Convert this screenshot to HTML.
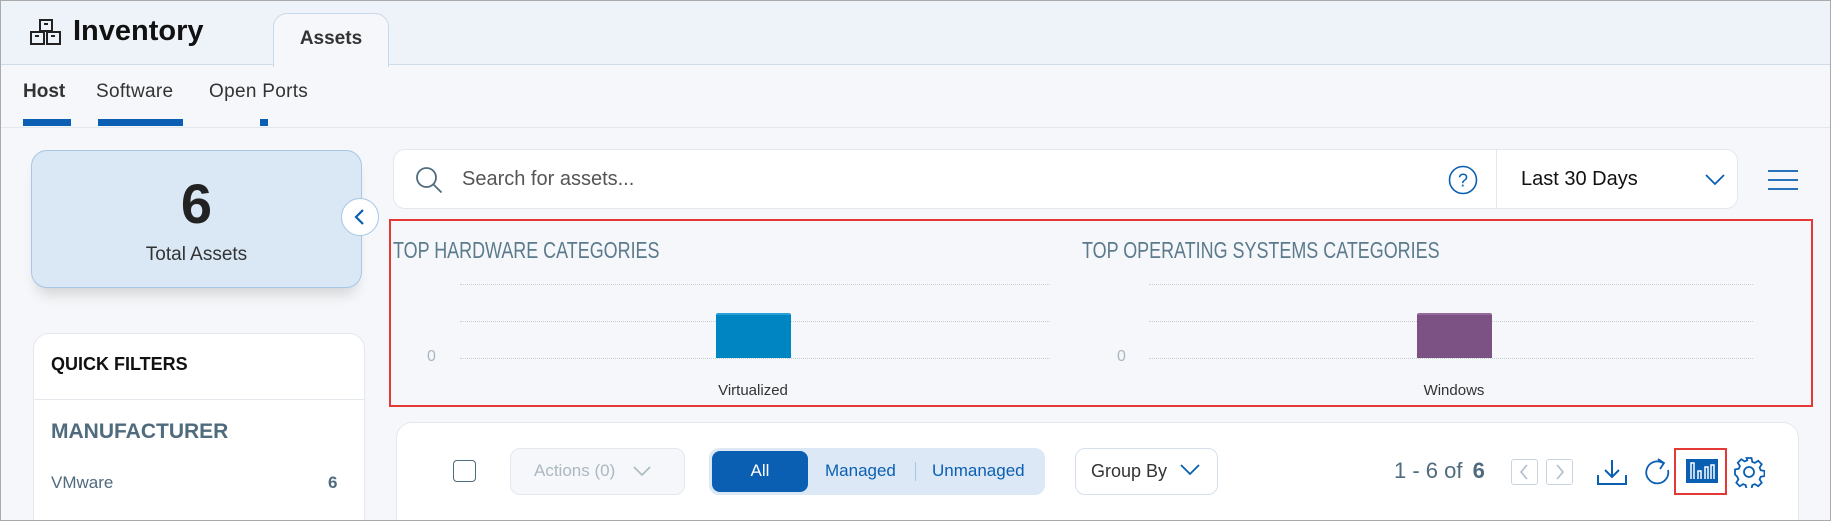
<!DOCTYPE html>
<html><head><meta charset="utf-8"><style>
*{box-sizing:border-box;margin:0;padding:0}
html,body{width:1831px;height:521px;overflow:hidden}
body{font-family:"Liberation Sans",sans-serif;background:#f5f7fa}
#w{position:relative;width:1831px;height:521px;overflow:hidden;border:1px solid #aaa;background:#f5f7fa}
.a{position:absolute}
.hdr{left:0;top:0;width:1829px;height:64px;background:#eef3fa;border-bottom:1px solid #cfdceb}
.t{white-space:nowrap}
.card{background:#fff;border:1px solid #e3e8ef;border-radius:16px}
.cb{border-bottom:none;border-radius:16px 16px 0 0}
.cond{display:inline-block;transform:scaleX(.78);transform-origin:left center;font-size:23px;color:#5b7a8c;letter-spacing:0}
.dot{border-top:1px dotted #c8d0d8;height:0}
</style></head><body><div id="w">
<div class="a hdr"></div>
<svg class="a" style="left:29px;top:18px" width="33" height="27" viewBox="0 0 33 27" fill="none" stroke="#222" stroke-width="2"><rect x="10" y="1" width="12" height="11"/><rect x="1" y="13" width="13" height="12"/><rect x="17" y="13" width="13" height="12"/><path d="M14 5h4M5 17h4M21 17h4"/></svg>
<div class="a t" style="left:72px;top:14px;font-size:29px;font-weight:bold;color:#111">Inventory</div>
<div class="a" style="left:272px;top:12px;width:116px;height:54px;background:#f5f7fa;border:1px solid #c9d9ec;border-bottom:none;border-radius:14px 14px 0 0"></div>
<div class="a t" style="left:272px;top:27px;width:116px;text-align:center;font-size:19px;font-weight:bold;color:#333">Assets</div>
<div class="a t" style="left:22px;top:80px;font-size:19px;font-weight:bold;color:#333">Host</div>
<div class="a t" style="left:95px;top:80px;font-size:19px;color:#333;letter-spacing:.3px">Software</div>
<div class="a t" style="left:208px;top:80px;font-size:19px;color:#333;letter-spacing:.3px">Open Ports</div>
<div class="a" style="left:22px;top:118px;width:48px;height:7px;background:#0b5fb3"></div>
<div class="a" style="left:97px;top:118px;width:85px;height:7px;background:#0b5fb3"></div>
<div class="a" style="left:259px;top:118px;width:8px;height:7px;background:#0b5fb3"></div>
<div class="a" style="left:0;top:126px;width:1829px;height:1px;background:#e3e8ee"></div>

<div class="a" style="left:30px;top:149px;width:331px;height:138px;background:#dae7f5;border:1px solid #a8c6e6;border-radius:16px;box-shadow:0 12px 14px -6px rgba(0,0,0,.15)"></div>
<div class="a t" style="left:30px;top:170px;width:331px;text-align:center;font-size:56px;font-weight:bold;color:#222">6</div>
<div class="a t" style="left:30px;top:243px;width:331px;text-align:center;font-size:19px;color:#333">Total Assets</div>
<div class="a" style="left:340px;top:197px;width:38px;height:38px;border-radius:50%;background:#fff;border:1px solid #a8c6e6"></div>
<svg class="a" style="left:352px;top:207px" width="14" height="18" viewBox="0 0 14 18"><path d="M10 2L3 9l7 7" fill="none" stroke="#0b5fb3" stroke-width="2.2"/></svg>

<div class="a card cb" style="left:32px;top:332px;width:332px;height:187px"></div>
<div class="a t" style="left:50px;top:353px;font-size:18px;font-weight:bold;color:#111">QUICK FILTERS</div>
<div class="a" style="left:33px;top:398px;width:330px;height:1px;background:#e5e9ee"></div>
<div class="a t" style="left:50px;top:419px;font-size:21px;font-weight:bold;color:#4f6b7e">MANUFACTURER</div>
<div class="a t" style="left:50px;top:472px;font-size:17px;color:#4f6b7e">VMware</div>
<div class="a t" style="left:327px;top:472px;font-size:17px;font-weight:bold;color:#4f6b7e">6</div>

<div class="a card" style="left:392px;top:148px;width:1345px;height:60px;border-radius:12px"></div>
<svg class="a" style="left:414px;top:165px" width="28" height="28" viewBox="0 0 28 28" fill="none" stroke="#4f6b7e" stroke-width="1.8"><circle cx="11.5" cy="11.5" r="9.5"/><path d="M18.5 18.5l8 8"/></svg>
<div class="a t" style="left:461px;top:167px;font-size:20px;color:#555">Search for assets...</div>
<svg class="a" style="left:1447px;top:164px" width="30" height="30" viewBox="0 0 30 30"><circle cx="15" cy="15" r="13.5" fill="none" stroke="#0b5fb3" stroke-width="1.6"/><text x="15" y="21.5" text-anchor="middle" font-family="Liberation Sans" font-size="18" fill="#0b5fb3">?</text></svg>
<div class="a" style="left:1495px;top:149px;width:1px;height:58px;background:#e3e8ef"></div>
<div class="a t" style="left:1520px;top:167px;font-size:20px;color:#111">Last 30 Days</div>
<svg class="a" style="left:1703px;top:171px" width="22" height="14" viewBox="0 0 22 14"><path d="M2 3l9 9 9-9" fill="none" stroke="#0b5fb3" stroke-width="1.8"/></svg>
<svg class="a" style="left:1766px;top:168px" width="32" height="22" viewBox="0 0 32 22" stroke="#0b5fb3" stroke-width="1.8"><path d="M1 2h30M1 11h30M1 20h30"/></svg>

<div class="a" style="left:388px;top:218px;width:1424px;height:188px;border:2px solid #e53935"></div>
<div class="a t" style="left:392px;top:236px"><span class="cond">TOP HARDWARE CATEGORIES</span></div>
<div class="a t" style="left:1081px;top:236px"><span class="cond">TOP OPERATING SYSTEMS CATEGORIES</span></div>
<div class="a dot" style="left:459px;top:283px;width:590px"></div>
<div class="a dot" style="left:459px;top:320px;width:590px"></div>
<div class="a dot" style="left:459px;top:357px;width:590px"></div>
<div class="a dot" style="left:1148px;top:283px;width:604px"></div>
<div class="a dot" style="left:1148px;top:320px;width:604px"></div>
<div class="a dot" style="left:1148px;top:357px;width:604px"></div>
<div class="a t" style="left:426px;top:347px;font-size:16px;color:#aab6c0">0</div>
<div class="a t" style="left:1116px;top:347px;font-size:16px;color:#aab6c0">0</div>
<div class="a" style="left:715px;top:312px;width:75px;height:45px;background:#0085c3;border-radius:2px 2px 0 0;border-top:2px solid #2aa0d8"></div>
<div class="a" style="left:1416px;top:312px;width:75px;height:45px;background:#7b5283;border-radius:2px 2px 0 0;border-top:2px solid #936a9b"></div>
<div class="a t" style="left:672px;top:381px;width:160px;text-align:center;font-size:15px;color:#333">Virtualized</div>
<div class="a t" style="left:1373px;top:381px;width:160px;text-align:center;font-size:15px;color:#333">Windows</div>

<div class="a card cb" style="left:395px;top:421px;width:1403px;height:98px"></div>
<div class="a" style="left:452px;top:459px;width:23px;height:22px;border:1.5px solid #4f6b7e;border-radius:4px"></div>
<div class="a" style="left:509px;top:447px;width:175px;height:47px;border:1px solid #e3e8ef;background:#f5f7fa;border-radius:10px"></div>
<div class="a t" style="left:533px;top:460px;font-size:17px;color:#aab8c2">Actions (0)</div>
<svg class="a" style="left:631px;top:463px" width="20" height="14" viewBox="0 0 20 14"><path d="M2 3l8 8 8-8" fill="none" stroke="#aab8c2" stroke-width="1.6"/></svg>
<div class="a" style="left:708px;top:447px;width:336px;height:47px;background:#dce8f5;border-radius:10px"></div>
<div class="a" style="left:711px;top:450px;width:96px;height:41px;background:#0b5fb3;border-radius:8px"></div>
<div class="a t" style="left:711px;top:460px;width:96px;text-align:center;font-size:17px;color:#fff">All</div>
<div class="a t" style="left:824px;top:460px;font-size:17px;color:#0b5fb3">Managed</div>
<div class="a" style="left:914px;top:461px;width:1px;height:19px;background:#a8c6e6"></div>
<div class="a t" style="left:931px;top:460px;font-size:17px;color:#0b5fb3">Unmanaged</div>
<div class="a" style="left:1074px;top:447px;width:143px;height:47px;border:1px solid #d5e0ec;border-radius:10px;background:#fff"></div>
<div class="a t" style="left:1090px;top:460px;font-size:18px;color:#333">Group By</div>
<svg class="a" style="left:1178px;top:461px" width="22" height="14" viewBox="0 0 22 14"><path d="M2 3l9 9 9-9" fill="none" stroke="#0b5fb3" stroke-width="1.8"/></svg>
<div class="a t" style="left:1393px;top:457px;font-size:22px;color:#4f6b7e">1 - 6 of <b style="margin-left:4px">6</b></div>
<div class="a" style="left:1510px;top:458px;width:27px;height:26px;border:1.5px solid #c8d4df;border-radius:3px"></div>
<svg class="a" style="left:1516px;top:462px" width="14" height="18" viewBox="0 0 14 18"><path d="M10 2L4 9l6 7" fill="none" stroke="#b0bfcc" stroke-width="1.6"/></svg>
<div class="a" style="left:1545px;top:458px;width:27px;height:26px;border:1.5px solid #c8d4df;border-radius:3px"></div>
<svg class="a" style="left:1552px;top:462px" width="14" height="18" viewBox="0 0 14 18"><path d="M4 2l6 7-6 7" fill="none" stroke="#b0bfcc" stroke-width="1.6"/></svg>
<svg class="a" style="left:1595px;top:457px" width="32" height="28" viewBox="0 0 32 28" fill="none" stroke="#0b5fb3" stroke-width="2"><path d="M16 2v17M9 12l7 7 7-7M2 17v9h28v-9"/></svg>
<svg class="a" style="left:1642px;top:456px" width="30" height="32" viewBox="0 0 30 32" fill="none" stroke="#0b5fb3" stroke-width="1.8"><path d="M20 6A11 11 0 1 0 25 13"/><path d="M15 2l6 4-4 6"/></svg>
<div class="a" style="left:1673px;top:447px;width:53px;height:47px;border:2px solid #e53935"></div>
<svg class="a" style="left:1685px;top:458px" width="32" height="24" viewBox="0 0 32 24"><rect width="32" height="24" fill="#0b5fb3"/><path d="M5 20V4h3v16M12 20v-8h3v8M19 20V8h3v12M25 20V6h3v14" fill="none" stroke="#fff" stroke-width="1.5"/></svg>
<svg class="a" style="left:1732px;top:455px" width="32" height="32" viewBox="0 0 32 32" fill="none" stroke="#0b5fb3" stroke-width="1.8"><path d="M13.5 2h5l.8 3.8 2.6 1.1 3.3-2.1 3.5 3.5-2.1 3.3 1.1 2.6 3.8.8v5l-3.8.8-1.1 2.6 2.1 3.3-3.5 3.5-3.3-2.1-2.6 1.1-.8 3.8h-5l-.8-3.8-2.6-1.1-3.3 2.1-3.5-3.5 2.1-3.3-1.1-2.6L2 18.5v-5l3.8-.8 1.1-2.6-2.1-3.3 3.5-3.5 3.3 2.1 2.6-1.1z"/><circle cx="16" cy="16" r="5"/></svg>
</div></body></html>
